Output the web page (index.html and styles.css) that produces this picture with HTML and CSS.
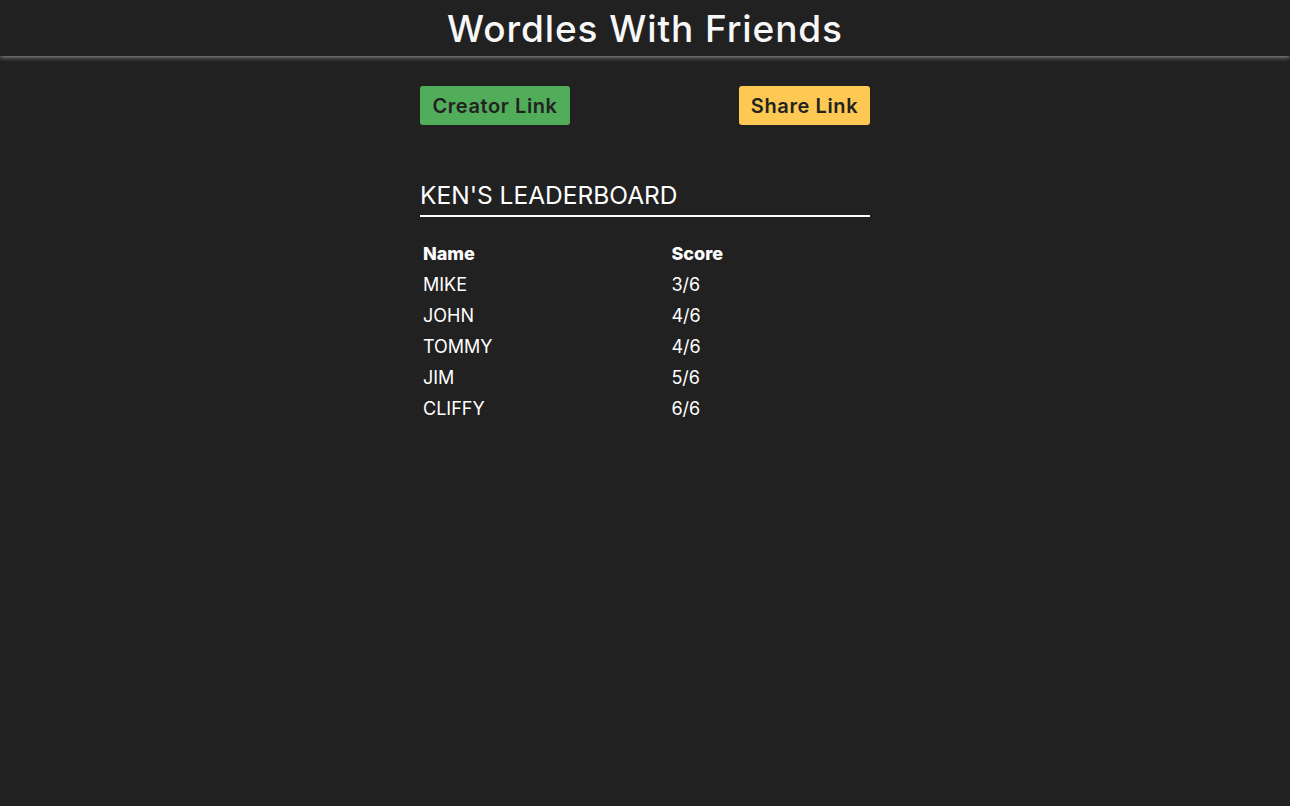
FILE: index.html
```html
<!DOCTYPE html>
<html>
<head>
<meta charset="utf-8">
<title>Wordles With Friends</title>
<link rel="stylesheet" href="styles.css">
</head>
<body>
<header class="site-header">
  <h1 class="site-title">Wordles With Friends</h1>
</header>
<main class="content">
  <div class="link-row">
    <button class="btn btn-creator">Creator Link</button>
    <button class="btn btn-share">Share Link</button>
  </div>
  <h2 class="board-title">KEN'S LEADERBOARD</h2>
  <table class="board">
    <thead>
      <tr><th class="col-name">Name</th><th>Score</th></tr>
    </thead>
    <tbody>
      <tr><td>MIKE</td><td>3/6</td></tr>
      <tr><td>JOHN</td><td>4/6</td></tr>
      <tr><td>TOMMY</td><td>4/6</td></tr>
      <tr><td>JIM</td><td>5/6</td></tr>
      <tr><td>CLIFFY</td><td>6/6</td></tr>
    </tbody>
  </table>
</main>
</body>
</html>
```

FILE: styles.css
```css
html, body {
  margin: 0;
  padding: 0;
  background: #212121;
  color: #ffffff;
  font-family: Inter, "Open Sans", sans-serif;
}

.site-header {
  height: 56px;
  display: flex;
  align-items: center;
  justify-content: center;
  background: #212121;
  box-shadow: 0 1px 5px #9a9a9a;
  position: relative;
}

.site-title {
  margin: 0;
  font-size: 37px;
  font-weight: 500;
  color: #f7f7f7;
  letter-spacing: 0.9px;
}

.content {
  width: 450px;
  margin: 0 auto;
  padding-top: 30px;
}

.link-row {
  display: flex;
  justify-content: space-between;
}

.btn {
  font-family: inherit;
  font-size: 20px;
  font-weight: 600;
  letter-spacing: 0.6px;
  color: #222222;
  border: none;
  border-radius: 3px;
  height: 39px;
  padding: 0 4px;
  cursor: pointer;
}

.btn-creator {
  background: #52ad5a;
  width: 150px;
}

.btn-share {
  background: #fec952;
  width: 131px;
}

.board-title {
  margin: 55px 0 0 0;
  font-size: 24.5px;
  font-weight: 400;
  padding-bottom: 5px;
  border-bottom: 2px solid #ffffff;
  line-height: 30px;
}

.board {
  margin-top: 20px;
  width: 100%;
  border-collapse: separate;
  border-spacing: 2px;
  font-size: 18px;
}

.board th {
  text-align: left;
  font-weight: 800;
  padding: 1px;
  height: 27px;
}

.board td {
  padding: 1px;
  height: 27px;
}

.col-name {
  width: 55.5%;
}
```
